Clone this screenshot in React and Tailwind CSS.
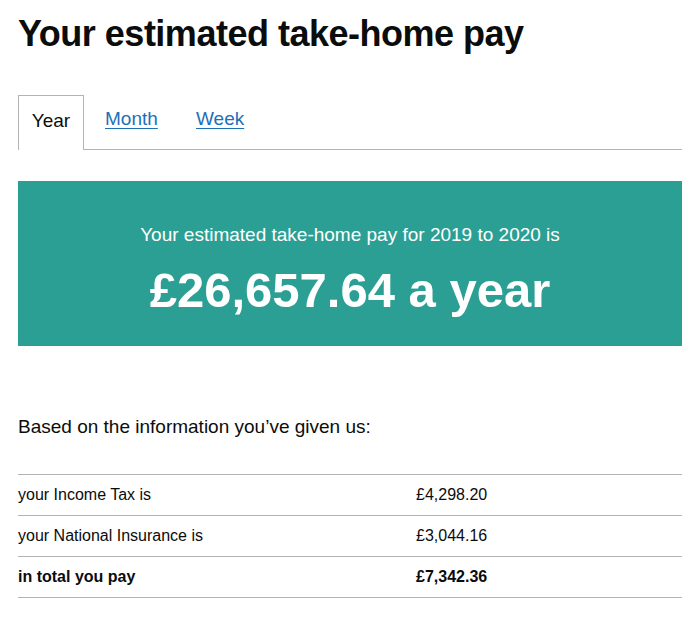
import React from 'react'

const ROWS = [
  { label: 'your Income Tax is', amount: '£4,298.20' },
  { label: 'your National Insurance is', amount: '£3,044.16' },
  { label: 'in total you pay', amount: '£7,342.36', bold: true },
]

export default function App() {
  return (
    <div className="bg-white text-[#0b0c0c] px-[18px] pt-[12px] min-h-[624px]" style={{ fontFamily: '"Liberation Sans", Arial, sans-serif' }}>
      <h1 className="text-[36px] leading-[44px] font-bold tracking-[-0.5px]">Your estimated take-home pay</h1>

      {/* Tabs */}
      <div className="mt-[38px] flex items-end border-b border-[#b1b4b6]">
        <div className="-mb-px h-[55px] w-[66px] flex justify-center pt-[12px] border border-b-0 border-[#b1b4b6] bg-white text-[19px] leading-[25px]">
          Year
        </div>
        <a href="#" className="ml-[21px] w-[55px] h-[55px] pt-[12px] text-[19px] leading-[25px] text-[#1d70b8] underline underline-offset-[3px]">
          Month
        </a>
        <a href="#" className="ml-[36px] h-[55px] pt-[12px] text-[19px] leading-[25px] text-[#1d70b8] underline underline-offset-[3px]">
          Week
        </a>
      </div>

      {/* Result panel */}
      <div className="mt-[31px] h-[165px] bg-[#2c9f95] text-white flex flex-col items-center pt-[41px]">
        <p className="text-[19px] leading-[25px]">Your estimated take-home pay for 2019 to 2020 is</p>
        <p className="mt-[17px] text-[49px] leading-[52px] font-bold">£26,657.64 a year</p>
      </div>

      <p className="mt-[68px] text-[19px] leading-[25px]">Based on the information you’ve given us:</p>

      {/* Breakdown */}
      <div className="mt-[35px] border-t border-[#b1b4b6]">
        {ROWS.map(r => (
          <div key={r.label} className={`flex h-[41px] items-center border-b border-[#b1b4b6] text-[16px] ${r.bold ? 'font-bold' : ''}`}>
            <div className="w-[398px]">{r.label}</div>
            <div>{r.amount}</div>
          </div>
        ))}
      </div>
    </div>
  )
}
